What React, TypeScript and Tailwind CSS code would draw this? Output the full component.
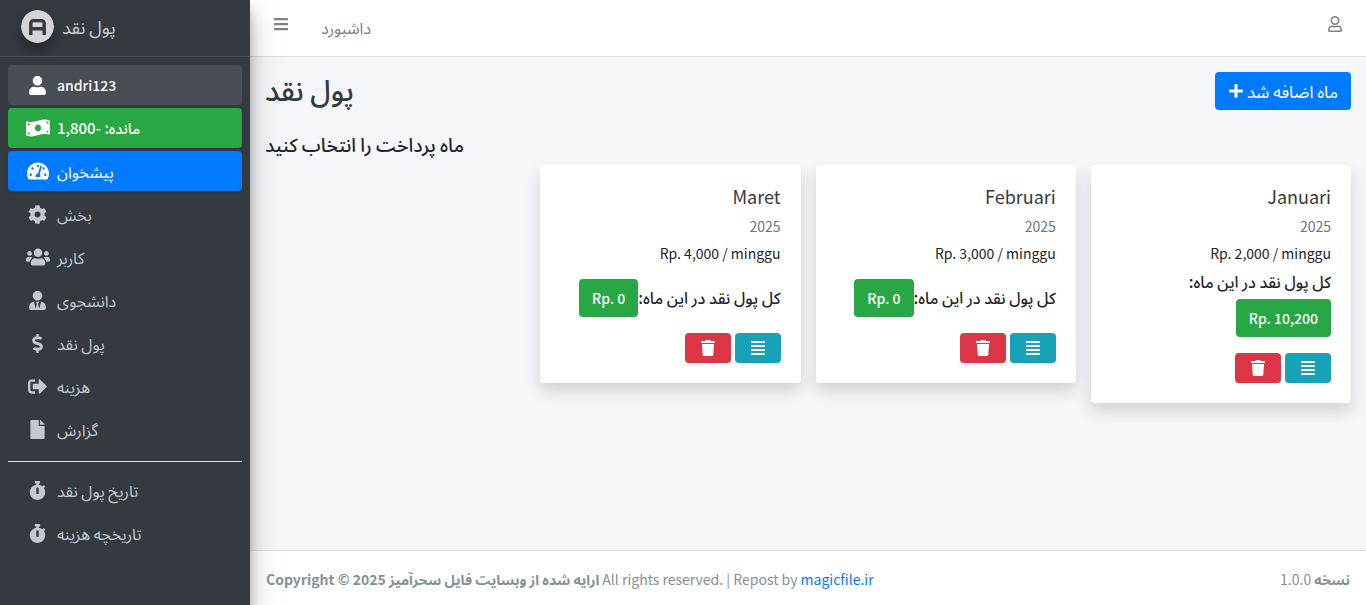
import type { ReactNode } from "react";
import {
  FaAlignJustify,
  FaBars,
  FaCog,
  FaDollarSign,
  FaFile,
  FaMoneyBillWave,
  FaPlus,
  FaRegUser,
  FaSignOutAlt,
  FaStopwatch,
  FaTachometerAlt,
  FaTrash,
  FaUser,
  FaUsers,
  FaUserTie,
} from "react-icons/fa";

type NavItem = { label: string; icon: ReactNode; className?: string };

const mainNav: NavItem[] = [
  { label: "andri123", icon: <FaUser />, className: "bg-[#494e54] text-white text-sm font-medium" },
  { label: "مانده: -1,800", icon: <FaMoneyBillWave className="size-6" />, className: "bg-[#28a745] text-white text-[15px] font-medium" },
  { label: "پیشخوان", icon: <FaTachometerAlt className="size-[22px]" />, className: "bg-[#007bff] text-white text-base shadow" },
  { label: "بخش", icon: <FaCog /> },
  { label: "کاربر", icon: <FaUsers className="size-6" /> },
  { label: "دانشجوی", icon: <FaUserTie /> },
  { label: "پول نقد", icon: <FaDollarSign /> },
  { label: "هزینه", icon: <FaSignOutAlt /> },
  { label: "گزارش", icon: <FaFile /> },
];

const historyNav: NavItem[] = [
  { label: "تاریخ پول نقد", icon: <FaStopwatch /> },
  { label: "تاریخچه هزینه", icon: <FaStopwatch /> },
];

const months = [
  { name: "Januari", year: 2025, weekly: "2,000", total: "10,200" },
  { name: "Februari", year: 2025, weekly: "3,000", total: "0" },
  { name: "Maret", year: 2025, weekly: "4,000", total: "0" },
];

function Logo() {
  return (
    <svg viewBox="0 0 33 33" className="size-[33px] rounded-full shadow-[0_8px_12px_rgba(0,0,0,0.3)]" aria-hidden="true">
      <circle cx="16.5" cy="16.5" r="16.5" fill="#d3d5d7" />
      <path d="M9.8 25V13.2a2.6 2.6 0 0 1 2.6-2.6h8.2a2.6 2.6 0 0 1 2.6 2.6V25M9.8 18.8h13.4" fill="none" stroke="#343a40" strokeWidth="3.4" />
    </svg>
  );
}

function NavList({ items }: { items: NavItem[] }) {
  return (
    <ul className="flex flex-col gap-[3px]">
      {items.map((item) => (
        <li key={item.label}>
          <a href="#" className={`flex h-10 items-center gap-1.5 rounded px-4 ${item.className ?? "text-base text-[#c2c7d0]"}`}>
            <span className="flex w-[27px] justify-center text-[19px]">{item.icon}</span>
            <span>{item.label}</span>
          </a>
        </li>
      ))}
    </ul>
  );
}

function MonthCard({ month }: { month: (typeof months)[number] }) {
  return (
    <article className="rounded bg-white px-5 pt-[19px] pb-5 shadow-[0_8px_16px_rgba(0,0,0,0.15)]">
      <h3 className="text-lg leading-6 text-[#343a40]">{month.name}</h3>
      <p className="mt-1.5 leading-6 text-[#6c757d]">{month.year}</p>
      <p dir="ltr" className="mt-[3px] text-right leading-6">Rp. {month.weekly} / minggu</p>
      <div className="mt-1.5 flex flex-wrap items-baseline">
        <span className="text-base font-medium leading-5">کل پول نقد در این ماه:</span>
        <button type="button" dir="ltr" className="mt-2 h-[38px] rounded bg-[#28a745] px-[13px] font-medium text-white">
          Rp. {month.total}
        </button>
      </div>
      <div className="mt-4 flex gap-1">
        <button type="button" aria-label="جزئیات" className="flex h-[30px] w-[46px] items-center justify-center rounded bg-[#17a2b8] text-base text-white">
          <FaAlignJustify />
        </button>
        <button type="button" aria-label="حذف" className="flex h-[30px] w-[46px] items-center justify-center rounded bg-[#dc3545] text-base text-white">
          <FaTrash />
        </button>
      </div>
    </article>
  );
}

export default function App() {
  return (
    <div className="flex min-h-screen bg-[#f4f6f9] text-sm text-[#212529] [font-family:'Noto_Sans_CJK_SC','Noto_Sans_Arabic','DejaVu_Sans',sans-serif]">
      <aside className="z-10 w-[250px] shrink-0 bg-[#343a40] shadow-[0_14px_28px_rgba(0,0,0,0.25),0_10px_10px_rgba(0,0,0,0.22)]">
        <a href="#" className="flex h-[57px] items-center gap-2 border-b border-[#4b545c] px-[21px] pb-1 text-lg text-[#c9cbcd]">
          <Logo />
          <span>پول نقد</span>
        </a>
        <nav className="px-2 pt-2">
          <NavList items={mainNav} />
          <hr className="mt-3 mb-2 border-[#dee2e6]" />
          <NavList items={historyNav} />
        </nav>
      </aside>

      <div className="flex min-w-0 flex-1 flex-col">
        <header className="flex h-[57px] items-center justify-between border-b border-[#dee2e6] bg-white px-[23px] pb-0.5 text-[#808080]">
          <div className="flex items-center gap-8">
            <button type="button" aria-label="منو" className="pb-1.5 text-base"><FaBars /></button>
            <a href="#" className="text-base">داشبورد</a>
          </div>
          <button type="button" aria-label="حساب کاربری" className="pb-1.5 text-base"><FaRegUser /></button>
        </header>

        <main className="flex-1 px-[15px] pt-[15px]">
          <div className="flex items-start justify-between">
            <h1 className="text-[29px] font-medium leading-8 text-[#343a40]">پول نقد</h1>
            <button type="button" dir="rtl" className="flex h-[38px] items-center gap-[3px] rounded bg-[#007bff] px-[13px] text-[17px] leading-6 text-white">
              <span>ماه اضافه شد</span>
              <FaPlus className="size-4" />
            </button>
          </div>
          <h2 className="mt-5 text-[19px] font-medium leading-7">ماه پرداخت را انتخاب کنید</h2>
          <div dir="rtl" className="mt-[7px] grid grid-cols-4 items-start gap-[15px]">
            {months.map((month) => (
              <MonthCard key={month.name} month={month} />
            ))}
          </div>
        </main>

        <footer className="flex justify-between border-t border-[#dee2e6] bg-white px-4 pt-4 pb-3.5 leading-6 text-[#869099]">
          <p>
            <strong>Copyright © 2025 ارایه شده از وبسایت فایل سحرآمیز</strong> All rights reserved. | Repost by{" "}
            <a href="#" className="text-[#007bff]">magicfile.ir</a>
          </p>
          <p dir="rtl"><b>نسخه</b> 1.0.0</p>
        </footer>
      </div>
    </div>
  );
}
